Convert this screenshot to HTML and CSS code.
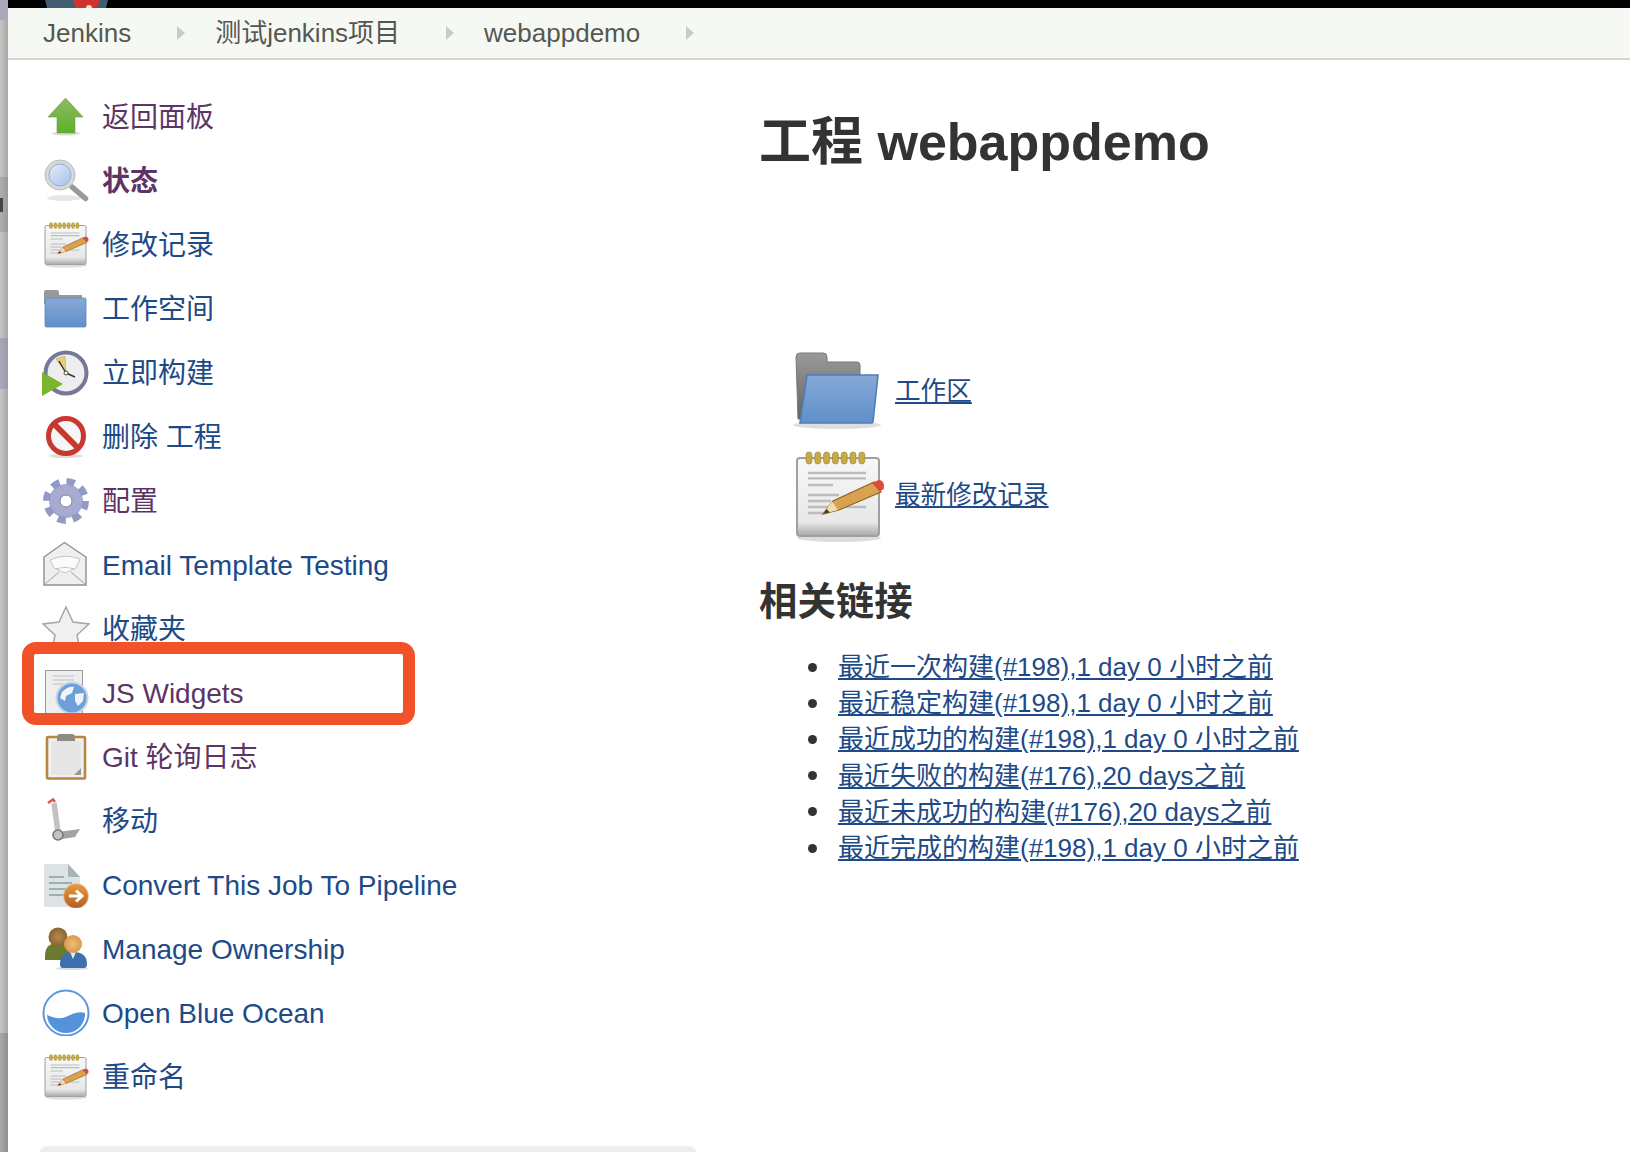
FILE: index.html
```html
<!DOCTYPE html>
<html lang="zh-CN">

<head>
    <meta charset="UTF-8">
    <title>webappdemo [Jenkins]</title>
    <link rel="stylesheet" href="styles.css">
</head>

<body>

    <!-- Shared icon drawings -->
    <svg class="icon-defs" width="0" height="0" aria-hidden="true">
        <defs>
            <linearGradient id="g-paper" x1="0" y1="0" x2="0" y2="1">
                <stop offset="0" stop-color="#f8f8f8"/>
                <stop offset="0.82" stop-color="#e8e8e8"/>
                <stop offset="1" stop-color="#a8a8a8"/>
            </linearGradient>
            <linearGradient id="g-blue" x1="0" y1="0" x2="0" y2="1">
                <stop offset="0" stop-color="#86a9d6"/>
                <stop offset="1" stop-color="#5f8fca"/>
            </linearGradient>
            <linearGradient id="g-green" x1="0" y1="0" x2="0" y2="1">
                <stop offset="0" stop-color="#8dba62"/>
                <stop offset="1" stop-color="#5fb02c"/>
            </linearGradient>
            <linearGradient id="g-grey" x1="0" y1="0" x2="0" y2="1">
                <stop offset="0" stop-color="#9a9a9a"/>
                <stop offset="1" stop-color="#636363"/>
            </linearGradient>
            <linearGradient id="g-glass" x1="0" y1="0" x2="1" y2="1">
                <stop offset="0" stop-color="#e4edf9"/>
                <stop offset="1" stop-color="#a3c1e8"/>
            </linearGradient>
            <linearGradient id="g-orange" x1="0" y1="0" x2="0" y2="1">
                <stop offset="0" stop-color="#ec9a3c"/>
                <stop offset="1" stop-color="#b0602a"/>
            </linearGradient>
            <radialGradient id="g-head-a">
                <stop offset="0" stop-color="#b58a4a"/>
                <stop offset="1" stop-color="#8a6330"/>
            </radialGradient>
            <radialGradient id="g-head-b">
                <stop offset="0" stop-color="#efbf7c"/>
                <stop offset="1" stop-color="#d7994a"/>
            </radialGradient>
            <symbol id="i-notepad" viewBox="0 0 48 48">
                <ellipse cx="24" cy="45.5" rx="21" ry="2" fill="#ddd"/>
                <rect x="3" y="5.5" width="41" height="39" rx="1.5" fill="url(#g-paper)" stroke="#a0a0a0"/>
                <g fill="#c8ab45" stroke="#94812f" stroke-width="0.3">
                    <rect x="7.5" y="2.5" width="3" height="6" rx="1.5"/>
                    <rect x="11.9" y="2.5" width="3" height="6" rx="1.5"/>
                    <rect x="16.3" y="2.5" width="3" height="6" rx="1.5"/>
                    <rect x="20.7" y="2.5" width="3" height="6" rx="1.5"/>
                    <rect x="25.1" y="2.5" width="3" height="6" rx="1.5"/>
                    <rect x="29.5" y="2.5" width="3" height="6" rx="1.5"/>
                    <rect x="33.9" y="2.5" width="3" height="6" rx="1.5"/>
                </g>
                <g stroke="#bcbcbc" stroke-width="1.2">
                    <path d="M8.5 13H37.5M8.5 15.7H37.5M8.5 19H21M8.5 24H24M8.5 27H20M8.5 30H37.5M8.5 33H18"/>
                </g>
                <path d="M16 33.5L21 27L41.5 17.5L45 22.5L24 31.5Z" fill="#d9a24e" stroke="#8d6426" stroke-width="0.6"/>
                <path d="M16 33.5L20.5 27.3L23.5 31.5Z" fill="#f0dcae"/>
                <path d="M16 33.5L17.8 31L19.4 32.8Z" fill="#4a3a20"/>
                <path d="M40.5 18L43.8 16.5Q46 16.5 46.5 19L46.3 21L44.4 22.3Z" fill="#dc4a3f"/>
            </symbol>
            <symbol id="i-folder-open" viewBox="0 0 48 48">
                <ellipse cx="23" cy="41" rx="22" ry="2" fill="#dedede"/>
                <path d="M2.5 7Q2.5 5 4.5 5H16Q18 5 18 7V9.5H33Q34.5 9.5 34.5 11V38H3.5Z" fill="url(#g-grey)" stroke="#777" stroke-width="0.5"/>
                <path d="M8 16H43.5L41 39.5Q41 40 40 40H4.5Z" fill="url(#g-blue)" stroke="#4f7db6" stroke-width="0.8"/>
            </symbol>
        </defs>
    </svg>

    <div class="app">

        <!-- Strip of the window behind -->
        <div class="edge">
            <div class="edge-seg edge-a"></div>
            <div class="edge-seg edge-b"></div>
            <div class="edge-seg edge-c"><span class="edge-mark"></span></div>
            <div class="edge-seg edge-b edge-d"></div>
            <div class="edge-seg edge-e"></div>
            <div class="edge-seg edge-b edge-f"></div>
            <div class="edge-seg edge-g"></div>
        </div>

        <div class="page">
            <div class="top-bar">
                <svg class="butler" width="64" height="8" viewBox="0 0 64 8">
                    <path d="M0 0H63L61 8H2Z" fill="#3f5c70"/>
                    <path d="M28 0H55L53 6L48 8H31Z" fill="#d1322e"/>
                    <circle cx="44" cy="8" r="3" fill="#e8e0d4"/>
                </svg>
            </div>

            <nav class="breadcrumb">
                <a href="#">Jenkins</a><span class="crumb-arrow"></span>
                <a href="#">测试jenkins项目</a><span class="crumb-arrow"></span>
                <a href="#">webappdemo</a><span class="crumb-arrow"></span>
            </nav>

            <div class="content">

                <!-- Side panel -->
                <aside class="side-panel">
                    <ul class="tasks">
                        <li class="task visited">
                            <svg class="task-icon" viewBox="0 0 48 48">
                                <ellipse cx="24" cy="41.5" rx="14" ry="2" fill="#ddd"/>
                                <path d="M23.5 6L41 25H33V41H15V25H6Z" fill="url(#g-green)" stroke="#6ea043" stroke-width="0.6"/>
                            </svg>
                            <a href="#">返回面板</a>
                        </li>
                        <li class="task visited current">
                            <svg class="task-icon" viewBox="0 0 48 48">
                                <ellipse cx="22" cy="42" rx="17" ry="3" fill="#e6e6e6"/>
                                <path d="M30 31L43.5 42.5" stroke="#999" stroke-width="5.5" stroke-linecap="round"/>
                                <circle cx="18" cy="19" r="15" fill="#d8d8d8" stroke="#bbb"/>
                                <circle cx="18" cy="19" r="11" fill="url(#g-glass)" stroke="#8fb0de"/>
                            </svg>
                            <a href="#">状态</a>
                        </li>
                        <li class="task">
                            <svg class="task-icon"><use href="#i-notepad"/></svg>
                            <a href="#">修改记录</a>
                        </li>
                        <li class="task">
                            <svg class="task-icon" viewBox="0 0 48 48">
                                <path d="M2 8Q2 6 4 6H14Q17 6 17 8V11H40V20H2Z" fill="#9a9a9a"/>
                                <rect x="3" y="14" width="41" height="29" rx="1.5" fill="url(#g-blue)" stroke="#5a86bc" stroke-width="0.8"/>
                            </svg>
                            <a href="#">工作空间</a>
                        </li>
                        <li class="task">
                            <svg class="task-icon" viewBox="0 0 48 48">
                                <circle cx="24" cy="25" r="20.5" fill="#eeeeee" stroke="#77779a" stroke-width="4"/>
                                <path d="M24 25L14 11Q19 8.5 23 8.5Z" fill="#e6d272" stroke="#a99a52" stroke-width="0.5"/>
                                <path d="M24 25L17 13M24 25L33 29" stroke="#333" stroke-width="1.4"/>
                                <circle cx="24" cy="25" r="2" fill="#fff" stroke="#444"/>
                                <path d="M0 24L21 36L0 48Z" fill="#79b52e"/>
                            </svg>
                            <a href="#">立即构建</a>
                        </li>
                        <li class="task">
                            <svg class="task-icon" viewBox="0 0 48 48">
                                <ellipse cx="24" cy="44" rx="17" ry="2" fill="#ddd"/>
                                <circle cx="24" cy="24" r="17.5" fill="#f6f6f6" stroke="#c9382f" stroke-width="5"/>
                                <path d="M12 12L36 36" stroke="#c9382f" stroke-width="6"/>
                            </svg>
                            <a href="#">删除 工程</a>
                        </li>
                        <li class="task visited">
                            <svg class="task-icon" viewBox="0 0 48 48">
                                <circle cx="24" cy="25" r="17" fill="#a6abcf"/>
                                <circle cx="24" cy="25" r="19.5" fill="none" stroke="#9299c4" stroke-width="7" stroke-dasharray="8.3 7"/>
                                <circle cx="24" cy="25" r="6" fill="#fff" stroke="#7d84ad"/>
                            </svg>
                            <a href="#">配置</a>
                        </li>
                        <li class="task">
                            <svg class="task-icon" viewBox="0 0 48 48">
                                <path d="M2 17L22.5 2.5L44 17V45H2Z" fill="#efefef" stroke="#8f8f8f" stroke-width="1.4"/>
                                <path d="M8 20Q23 13 38 19L34 28L23 33L12 28Z" fill="#fbfbfb" stroke="#c4c4c4"/>
                                <path d="M3 44L17 32M43 44L29 32M14 29Q23 26 32 29" fill="none" stroke="#bdbdbd" stroke-width="1.2"/>
                            </svg>
                            <a href="#">Email Template Testing</a>
                        </li>
                        <li class="task">
                            <svg class="task-icon" viewBox="0 0 48 48">
                                <path d="M24 3L31 18L47 20L35 31L38 47L24 39L10 47L13 31L1 20L17 18Z" fill="#f0f0ee" stroke="#a6a6a6" stroke-width="1.5"/>
                            </svg>
                            <a href="#">收藏夹</a>
                        </li>
                        <li class="task visited task-marked">
                            <svg class="task-icon" viewBox="0 0 48 48">
                                <rect x="3.5" y="2.5" width="37" height="43" fill="#eeeeee" stroke="#9a9a9a"/>
                                <path d="M11 8H32M11 12H32M11 16H24" stroke="#bdbdbd" stroke-width="1.2"/>
                                <circle cx="30" cy="30" r="15.5" fill="#6f9fd8" stroke="#c7d6ea" stroke-width="2"/>
                                <path d="M20 24Q26 18 32 19L30 25L24 28L23 33L18 30ZM33 26L42 25L41 33L36 38L33 33Z" fill="#f0f3f7"/>
                            </svg>
                            <a href="#">JS Widgets</a>
                            <span class="mark-box"></span>
                        </li>
                        <li class="task visited">
                            <svg class="task-icon" viewBox="0 0 48 48">
                                <rect x="5" y="5" width="38" height="41.5" rx="1" fill="#f1f1f1" stroke="#b5873f" stroke-width="2.6"/>
                                <path d="M9 9H39V36L32 43H9Z" fill="#e6e6e6"/>
                                <path d="M32 43L39 36V43Z" fill="#999"/>
                                <path d="M15 9V5Q15 2 18 2H30Q33 2 33 5V9Z" fill="#8c8c82"/>
                            </svg>
                            <a href="#">Git 轮询日志</a>
                        </li>
                        <li class="task">
                            <svg class="task-icon" viewBox="0 0 48 48">
                                <path d="M6 7L11 3.5L13 6" fill="none" stroke="#d9554e" stroke-width="2.4"/>
                                <path d="M12 7L16 36" stroke="#c2c2c2" stroke-width="5.5"/>
                                <path d="M16 36L38 33L33 41L20 43Z" fill="#a3a3a3"/>
                                <circle cx="16" cy="39" r="5" fill="#c4c4c4" stroke="#777" stroke-width="1.6"/>
                            </svg>
                            <a href="#">移动</a>
                        </li>
                        <li class="task">
                            <svg class="task-icon" viewBox="0 0 48 48">
                                <path d="M4 4H26L38 17V47H4Q2 47 2 45V6Q2 4 4 4Z" fill="#dde2e4"/>
                                <path d="M26 4L38 17H26Z" fill="#a6b4b8"/>
                                <path d="M7 17H22M7 23H30M7 29H24M7 35H24" stroke="#9db1ae" stroke-width="2"/>
                                <circle cx="34" cy="36" r="12.5" fill="url(#g-orange)" stroke="#f3c9a0" stroke-width="0.8"/>
                                <path d="M27 36H38M34 30.5L40 36L34 41.5" fill="none" stroke="#fff" stroke-width="3"/>
                            </svg>
                            <a href="#">Convert This Job To Pipeline</a>
                        </li>
                        <li class="task">
                            <svg class="task-icon" viewBox="0 0 48 48">
                                <ellipse cx="30" cy="44.5" rx="16" ry="1.6" fill="#ddd"/>
                                <path d="M3 32Q3 19 16 19Q27 19 28 32V36H3Z" fill="#6b7a2e"/>
                                <circle cx="16" cy="13" r="9.5" fill="url(#g-head-a)"/>
                                <path d="M18 40Q18 28 31 28Q45 28 45 40Q45 44 42 44H21Q18 44 18 40Z" fill="#3e6fae"/>
                                <path d="M28 28L31 35L34 28Z" fill="#e8edf3"/>
                                <circle cx="31" cy="20" r="9" fill="url(#g-head-b)"/>
                            </svg>
                            <a href="#">Manage Ownership</a>
                        </li>
                        <li class="task">
                            <svg class="task-icon" viewBox="0 0 48 48">
                                <circle cx="24" cy="25" r="22.5" fill="#fff" stroke="#5b95de" stroke-width="2"/>
                                <path d="M5 27C12 30 18 32 26 28C32 25 38 23 43 25A19 19 0 0 1 5 27Z" fill="#5592dc"/>
                            </svg>
                            <a href="#">Open Blue Ocean</a>
                        </li>
                        <li class="task">
                            <svg class="task-icon"><use href="#i-notepad"/></svg>
                            <a href="#">重命名</a>
                        </li>
                    </ul>
                    <div class="side-box"></div>
                </aside>

                <!-- Main panel -->
                <main class="main-panel">
                    <h1>工程 webappdemo</h1>

                    <div class="big-link">
                        <svg class="big-icon"><use href="#i-folder-open"/></svg>
                        <a href="#">工作区</a>
                    </div>
                    <div class="big-link">
                        <svg class="big-icon"><use href="#i-notepad"/></svg>
                        <a href="#">最新修改记录</a>
                    </div>

                    <h2>相关链接</h2>
                    <ul class="permalinks">
                        <li><a href="#">最近一次构建(#198),1 day 0 小时之前</a></li>
                        <li><a href="#">最近稳定构建(#198),1 day 0 小时之前</a></li>
                        <li><a href="#">最近成功的构建(#198),1 day 0 小时之前</a></li>
                        <li><a href="#">最近失败的构建(#176),20 days之前</a></li>
                        <li><a href="#">最近未成功的构建(#176),20 days之前</a></li>
                        <li><a href="#">最近完成的构建(#198),1 day 0 小时之前</a></li>
                    </ul>
                </main>
            </div>
        </div>
    </div>

</body>

</html>
```

FILE: styles.css
```css
* {
    box-sizing: border-box;
}

html, body {
    height: 100%;
}

body {
    margin: 0;
    overflow: hidden;
    background-color: white;
    color: #333;
    font-family: "Liberation Sans", "Noto Sans CJK SC", sans-serif;
}

a {
    color: #204a87;
}

.icon-defs {
    position: absolute;
}

.app {
    display: flex;
    height: 1152px;
}

/* Strip of the window behind */
.edge {
    width: 8px;
    flex-shrink: 0;
    display: flex;
    flex-direction: column;
}

.edge-seg {
    background: linear-gradient(to right, #c6c6c6, #a8a8a8);
}

.edge-a {
    height: 20px;
    background: #a9a9b8;
}

.edge-b {
    height: 157px;
}

.edge-c {
    height: 55px;
    display: flex;
    align-items: center;
    background: linear-gradient(to right, #aeaeae, #999);
}

.edge-mark {
    width: 3px;
    height: 14px;
    background-color: #444;
}

.edge-d {
    height: 106px;
}

.edge-e {
    height: 51px;
    background: linear-gradient(to right, #a8a8b8, #9a9aaa);
}

.edge-f {
    height: 644px;
}

.edge-g {
    flex: 1;
    background: linear-gradient(to right, #aaa, #8e8e8e);
}

.page {
    flex: 1;
    min-width: 0;
}

.top-bar {
    height: 8px;
    padding-left: 37px;
    background-color: black;
    display: flex;
}

.butler {
    display: block;
}

.breadcrumb {
    height: 52px;
    padding-left: 35px;
    display: flex;
    align-items: center;
    background-color: #f6f9f3;
    border-bottom: 2px solid #d3d7cf;
    font-size: 26px;
    line-height: 32px;
}

.breadcrumb a {
    color: #555753;
    text-decoration: none;
}

.crumb-arrow {
    width: 0;
    height: 0;
    margin: 0 30px 0 46px;
    border-left: 8px solid #c8ccc2;
    border-top: 7px solid transparent;
    border-bottom: 7px solid transparent;
}

.content {
    display: flex;
}

/* Side panel */
.side-panel {
    width: 751px;
    flex-shrink: 0;
    padding-top: 24px;
}

.tasks {
    list-style: none;
    margin: 0;
    padding: 0;
}

.task {
    position: relative;
    height: 64px;
    padding-left: 34px;
    display: flex;
    align-items: center;
    gap: 12px;
    font-size: 28px;
    line-height: 34px;
}

.task a {
    margin-top: 3px;
    text-decoration: none;
}

.task.visited a {
    color: #5c3566;
}

.task.current a {
    font-weight: bold;
}

.task-icon {
    width: 48px;
    height: 48px;
    flex-shrink: 0;
    filter: blur(0.6px);
}

.mark-box {
    position: absolute;
    left: 14px;
    top: -18px;
    width: 393px;
    height: 83px;
    border: 12px solid #f25227;
    border-radius: 14px;
}

.side-box {
    width: 660px;
    height: 40px;
    margin: 38px 0 0 30px;
    background-color: #eeeeee;
    border-radius: 10px;
}

/* Main panel */
.main-panel {
    flex: 1;
    min-width: 0;
}

.main-panel h1 {
    margin: 52px 0 167px;
    font-size: 52px;
    line-height: 60px;
}

.big-link {
    height: 104px;
    padding-left: 32px;
    display: flex;
    align-items: center;
    gap: 8px;
    font-size: 25.6px;
    line-height: 32px;
}

.big-icon {
    width: 96px;
    height: 96px;
    flex-shrink: 0;
    filter: blur(0.6px);
}

.main-panel h2 {
    margin: 31px 0 0;
    font-size: 38.4px;
    line-height: 48px;
}

.permalinks {
    list-style: none;
    margin: 23px 0 0;
    padding-left: 49px;
    font-size: 26px;
    line-height: 36.2px;
}

.permalinks li {
    display: flex;
    align-items: center;
    gap: 21px;
}

.permalinks li::before {
    content: "";
    width: 9px;
    height: 9px;
    border-radius: 50%;
    background-color: #333;
}
```
